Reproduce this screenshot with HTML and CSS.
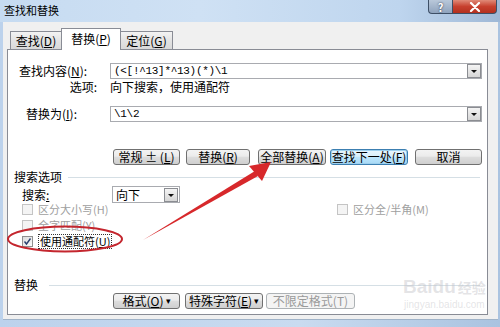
FILE: index.html
```html
<!DOCTYPE html>
<html lang="zh-CN">
<head>
  <meta charset="UTF-8">
  <title>查找和替换</title>
  <link rel="stylesheet" href="styles.css">
</head>
<body>

<div class="window">
  <!-- Title bar -->
  <div class="titlebar">
    <span class="title">查找和替换</span>
    <div class="caption-btns">
      <span class="cap help">?</span>
      <span class="cap close">
        <svg width="12" height="10" viewBox="0 0 12 10"><path d="M2 1 L10 9 M10 1 L2 9" stroke="#fff" stroke-width="2.2" stroke-linecap="round"/></svg>
      </span>
    </div>
  </div>

  <div class="client">
    <div class="tabs">
      <span class="tab tab-find">查找(<u>D</u>)</span>
      <span class="tab active">替换(<u>P</u>)</span>
      <span class="tab tab-goto">定位(<u>G</u>)</span>
    </div>

    <div class="panel">
      <div class="row find-row">
        <span class="lbl">查找内容(<u>N</u>):</span>
        <div class="combo"><span class="mono">(&lt;[!^13]*^13)(*)\1</span><span class="drop"></span></div>
      </div>
      <div class="row opts-row">
        <span class="lbl lbl-right">选项:</span>
        <span>向下搜索，使用通配符</span>
      </div>
      <div class="row repl-row">
        <span class="lbl lbl-repl">替换为(<u>I</u>):</span>
        <div class="combo"><span class="mono">\1\2</span><span class="drop"></span></div>
      </div>

      <div class="row btn-row">
        <span class="btn w-more">常规 ± (<u>L</u>)</span>
        <span class="btn w-repl">替换(<u>R</u>)</span>
        <span class="btn w-all">全部替换(<u>A</u>)</span>
        <span class="btn w-next focused">查找下一处(<u>F</u>)</span>
        <span class="btn w-cancel">取消</span>
      </div>

      <div class="row group-head">
        <span>搜索选项</span><span class="rule"></span>
      </div>
      <div class="row search-row">
        <span class="lbl lbl-search">搜索<u>:</u></span>
        <div class="select"><span>向下</span><span class="drop"></span></div>
      </div>
      <div class="row cb-row first">
        <div class="cb-left"><span class="cb disabled"><span class="box"></span>区分大小写(H)</span></div>
        <span class="cb disabled"><span class="box"></span>区分全/半角(M)</span>
      </div>
      <div class="row cb-row">
        <div class="cb-left"><span class="cb disabled"><span class="box"></span>全字匹配(Y)</span></div>
      </div>
      <div class="row cb-row">
        <div class="cb-left">
          <span class="cb"><span class="box checked">
            <svg width="9" height="9" viewBox="0 0 9 9"><path d="M1.5 4.5 L3.5 7 L7.5 1.5" fill="none" stroke="#2a3f6e" stroke-width="1.4"/></svg>
          </span><span class="focus">使用通配符(<u>U</u>)</span></span>
        </div>
      </div>

      <div class="row group-head repl-head">
        <span>替换</span><span class="rule"></span>
      </div>
      <div class="row btn-row bottom-btns">
        <span class="btn w-fmt">格式(<u>O</u>) <span class="arr">▾</span></span>
        <span class="btn w-special">特殊字符(<u>E</u>)<span class="arr">▾</span></span>
        <span class="btn w-nofmt disabled">不限定格式(T)</span>
      </div>
    </div>
  </div>

  <!-- Baidu watermark -->
  <div class="watermark">
    <div class="wm-logo">Bai<span class="paw">du</span><span class="wm-cn">经验</span></div>
    <div class="wm-url">jingyan.baidu.com</div>
  </div>

  <!-- Red annotation -->
  <svg class="overlay" width="500" height="327" viewBox="0 0 500 327">
    <ellipse cx="65" cy="239" rx="57" ry="12.5" fill="none" stroke="#c4262e" stroke-width="2"/>
    <polygon points="143,240 255,171 258,176" fill="#d7282b"/>
    <polygon points="271,162 249,166 262,181" fill="#d7282b"/>
  </svg>
</div>

</body>
</html>
```

FILE: styles.css
```css
body {
  margin: 0; width: 500px; height: 327px; overflow: hidden;
  font-family: "Noto Sans CJK SC", "Liberation Sans", sans-serif;
  font-size: 12px; line-height: 14px; color: #000;
  background: linear-gradient(90deg, #bcd2ec, #c9dbf0 60%, #aac3e0);
}
u { text-decoration: underline; }
.window { position: relative; height: 327px; }

/* title bar */
.titlebar {
  height: 22px; display: flex; align-items: flex-start;
  background: linear-gradient(90deg, #c6dbf1 0%, #cfe1f4 40%, #bed5ee 80%, #9fb8d6 100%);
}
.title { padding: 2px 0 0 4px; font-size: 11px; line-height: 16px; }
.caption-btns { margin-left: auto; margin-right: 3px; display: flex; height: 14px; }
.cap {
  height: 14px; box-sizing: border-box; display: flex; align-items: center; justify-content: center;
  border: 1px solid #3d4f66; border-top: none;
}
.help {
  width: 24px; border-radius: 0 0 0 4px; border-right: none;
  background: linear-gradient(#b9c8da, #8fa3bd);
  color: #fff; font-weight: bold; font-size: 11px; line-height: 12px;
  text-shadow: 0 0 2px #223;
}
.close {
  width: 45px; border-radius: 0 0 4px 0;
  background: linear-gradient(#e08a78, #c7402e 50%, #b3301f);
}

/* client area */
.client {
  margin: 0 2px 0 3px; height: 298px; box-sizing: border-box;
  background: #f0f0f0; padding-top: 6px;
  border-bottom: 1px solid #a0b3c8;
}
.tabs { display: flex; align-items: flex-end; height: 21px; padding-left: 7px; position: relative; z-index: 1; }
.tab {
  height: 18px; box-sizing: border-box; display: flex; align-items: center; justify-content: center;
  border: 1px solid #898c95; border-bottom: none;
  background: linear-gradient(#f3f3f3, #e3e3e3 50%, #d9d9d9);
}
.tab-find { width: 51px; border-right: none; }
.tab-goto { width: 52px; border-left: none; }
.tab.active { width: 60px; height: 22px; background: #fff; margin-bottom: -1px; padding-bottom: 2px; }

.panel {
  margin-left: 4px; width: 481px; height: 266px; box-sizing: border-box;
  border: 1px solid #898c95; background: #fff;
  display: flex; flex-direction: column;
}
.row { display: flex; align-items: center; flex: none; }
.lbl { width: 102px; box-sizing: border-box; flex: none; }

.find-row { margin-top: 13px; height: 16px; }
.find-row .lbl { padding-left: 11px; }
.opts-row { height: 15px; }
.lbl-right { text-align: right; padding-right: 13px; }
.repl-row { margin-top: 12px; height: 16px; }
.lbl-repl { padding-left: 18px; }

.combo, .select {
  height: 16px; box-sizing: border-box; border: 1px solid #a9abb0;
  display: flex; align-items: center; justify-content: space-between; padding-left: 3px;
}
.combo { width: 372px; }
.mono { font-family: "Liberation Mono", monospace; font-size: 11px; letter-spacing: -0.3px; }
.drop {
  width: 14px; height: 14px; box-sizing: border-box; position: relative;
  border: 1px solid #8b8d92; background: linear-gradient(#f4f4f4, #d6d6d6);
}
.drop::after {
  content: ""; position: absolute; left: 3px; top: 5px;
  border-left: 3px solid transparent; border-right: 3px solid transparent; border-top: 3px solid #111;
}

/* buttons */
.btn-row { margin-top: 27px; height: 16px; padding-left: 105px; }
.btn {
  height: 16px; box-sizing: border-box; display: flex; align-items: center; justify-content: center;
  border: 1px solid #707070; border-radius: 3px; white-space: nowrap;
  background: linear-gradient(#f3f3f3, #ebebeb 45%, #dddddd 50%, #cfcfcf);
}
.btn.focused {
  border-color: #3c7fb1;
  background: linear-gradient(#eaf6fd, #d9f0fc 45%, #bee6fd 50%, #a7d9f5);
  box-shadow: inset 0 0 0 1px #9ed0ee;
}
.btn.disabled { border-color: #adb2b5; background: #f4f4f4; color: #9a9a9a; }
.w-more { width: 67px; }
.w-repl { width: 64px; margin-left: 6px; }
.w-all { width: 68px; margin-left: 8px; }
.w-next { width: 78px; margin-left: 4px; }
.w-cancel { width: 67px; margin-left: 7px; }
.w-fmt { width: 67px; }
.w-special { width: 78px; margin-left: 5px; }
.w-nofmt { width: 89px; margin-left: 3px; }
.arr { font-size: 9px; margin-left: 2px; }

/* groups */
.group-head { margin-top: 5px; height: 14px; padding-left: 6px; }
.rule { flex: 1; height: 1px; background: #d5dfe5; margin: 0 7px 0 6px; }
.repl-head { margin-top: 29px; }
.repl-head .rule { margin-left: 11px; }
.bottom-btns { margin-top: 1px; }

.search-row { margin-top: 2px; height: 17px; }
.lbl-search { width: 104px; padding-left: 14px; }
.select { width: 68px; height: 17px; padding-right: 1px; }

/* checkboxes */
.cb-row { height: 16px; font-size: 11px; line-height: 16px; }
.cb-row.first { margin-top: -2px; }
.cb-left { width: 329px; padding-left: 14px; box-sizing: border-box; flex: none; }
.cb { display: flex; align-items: center; white-space: nowrap; height: 16px; }
.box {
  width: 11px; height: 11px; box-sizing: border-box; margin-right: 5px; flex: none;
  border: 1px solid #8f8f8f; background: linear-gradient(135deg, #dcdcdc, #fbfbfb);
  display: flex; align-items: center; justify-content: center;
}
.cb.disabled { color: #a0a0a0; }
.cb.disabled .box { border-color: #c4c4c4; background: #f4f4f4; }
.focus { outline: 1px dotted #333; outline-offset: -1px; padding: 0 2px; line-height: 15px; }

/* watermark */
.watermark { position: absolute; left: 403px; top: 276px; color: rgba(195, 195, 200, 0.45); text-align: center; }
.wm-logo { font-family: "Liberation Sans", sans-serif; font-size: 19px; font-weight: bold; line-height: 22px; }
.wm-cn { font-family: "Noto Sans CJK SC", sans-serif; font-size: 14px; margin-left: 2px; }
.wm-url { font-family: "Liberation Sans", sans-serif; font-size: 10px; line-height: 14px; }

.overlay { position: absolute; left: 0; top: 0; pointer-events: none; }
```
